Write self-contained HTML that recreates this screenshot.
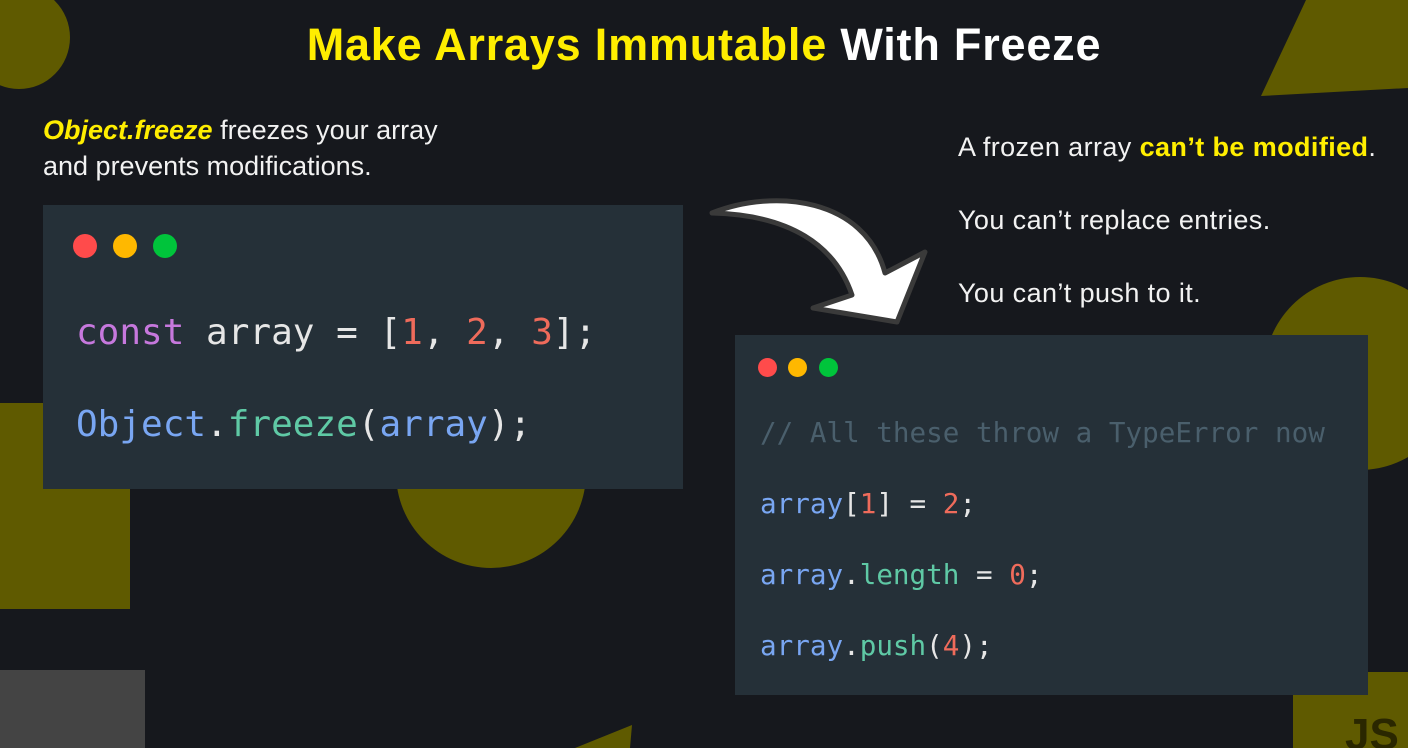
<!DOCTYPE html>
<html style="overflow:hidden"><head><meta charset="utf-8"><style>
*{margin:0;padding:0;box-sizing:border-box}
html,body{width:1408px;height:748px;overflow:hidden}
body{background:#16181d;position:relative;font-family:"Liberation Sans",sans-serif}
.a{position:absolute}
.ol{background:#5f5a00}
.box{position:absolute;background:#253038}
.dot{position:absolute;border-radius:50%}
.code{position:absolute;font-family:"DejaVu Sans Mono",monospace;white-space:pre;color:#e6e6e6}
.k{color:#c678dd}.n{color:#ef6b5b}.b{color:#79a6f2}.g{color:#5fc9a5}.c{color:#4a5f6c}
.t{position:absolute;color:#f2f2f2;font-size:27px;white-space:nowrap}
.y{color:#ffee00;font-weight:bold}
</style></head><body>
<div class="a ol" style="left:-32px;top:-14px;width:102px;height:103px;border-radius:50%"></div>
<svg class="a" style="left:0;top:0" width="1408" height="748">
<polygon points="1261,96 1306,0 1408,0 1408,88" fill="#5f5a00"/>
<polygon points="575,748 632,725 630,748" fill="#5f5a00"/>
</svg>
<div class="a ol" style="left:1264px;top:277px;width:192px;height:193px;border-radius:50%"></div>
<div class="a ol" style="left:0;top:403px;width:130px;height:206px"></div>
<div class="a ol" style="left:396px;top:378px;width:190px;height:190px;border-radius:50%"></div>
<div class="a" style="left:0;top:670px;width:145px;height:78px;background:#444"></div>
<div class="a ol" style="left:1293px;top:672px;width:115px;height:76px;overflow:hidden"><div style="position:absolute;left:52px;top:38px;font-size:44px;font-weight:bold;color:#2a2700;line-height:50px">JS</div></div>

<div class="a" style="left:0;width:1408px;top:19px;text-align:center;font-size:45px;font-weight:bold;color:#fff;letter-spacing:0.8px"><span style="color:#ffee00">Make Arrays Immutable</span> With Freeze</div>

<div class="t" style="left:43px;top:112px;line-height:36px"><span class="y" style="font-style:italic">Object.freeze</span> freezes your array<br>and prevents modifications.</div>
<div class="t" style="left:958px;top:132px;letter-spacing:0.4px">A frozen array <span class="y">can’t be modified</span>.</div>
<div class="t" style="left:958px;top:205px;letter-spacing:0.4px">You can’t replace entries.</div>
<div class="t" style="left:958px;top:278px;letter-spacing:0.4px">You can’t push to it.</div>

<div class="box" style="left:43px;top:205px;width:640px;height:284px"></div>
<div class="dot" style="left:73px;top:234px;width:24px;height:24px;background:#ff4b4b"></div>
<div class="dot" style="left:113px;top:234px;width:24px;height:24px;background:#ffb800"></div>
<div class="dot" style="left:153px;top:234px;width:24px;height:24px;background:#00c43b"></div>
<div class="code" style="left:76px;top:312px;font-size:36px"><span class="k">const</span> array = [<span class="n">1</span>, <span class="n">2</span>, <span class="n">3</span>];</div>
<div class="code" style="left:76px;top:404px;font-size:36px"><span class="b">Object</span>.<span class="g">freeze</span>(<span class="b">array</span>);</div>

<div class="box" style="left:735px;top:335px;width:633px;height:360px"></div>
<div class="dot" style="left:758px;top:358px;width:19px;height:19px;background:#ff4b4b"></div>
<div class="dot" style="left:788px;top:358px;width:19px;height:19px;background:#ffb800"></div>
<div class="dot" style="left:819px;top:358px;width:19px;height:19px;background:#00c43b"></div>
<div class="code" style="left:760px;top:416px;font-size:27.6px"><span class="c">// All these throw a TypeError now</span></div>
<div class="code" style="left:760px;top:487px;font-size:27.6px"><span class="b">array</span>[<span class="n">1</span>] = <span class="n">2</span>;</div>
<div class="code" style="left:760px;top:558px;font-size:27.6px"><span class="b">array</span>.<span class="g">length</span> = <span class="n">0</span>;</div>
<div class="code" style="left:760px;top:629px;font-size:27.6px"><span class="b">array</span>.<span class="g">push</span>(<span class="n">4</span>);</div>

<svg class="a" style="left:0;top:0" width="1408" height="748">
<path d="M712,213 C775,188 865,198 885,273 L925,252 L897,322 L813,308 L852,295 C835,245 790,215 712,213 Z" fill="#fff" stroke="#3a3a3a" stroke-width="5" stroke-linejoin="round"/>
</svg>
</body></html>
